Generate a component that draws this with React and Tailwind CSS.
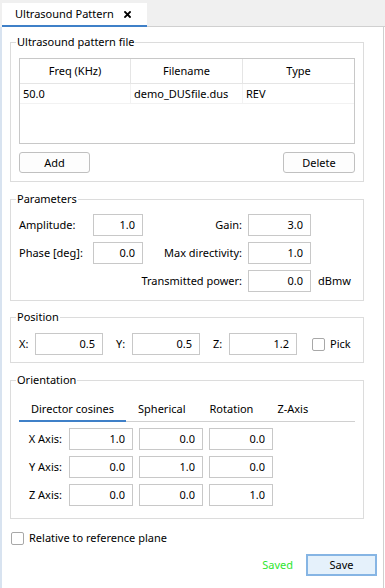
import React from "react";

const Field = ({ value, className = "" }) => (
  <div className={`h-[22px] border border-[#c8c8c8] bg-white flex items-center justify-end pr-[7px] ${className}`}>
    {value}
  </div>
);

const Group = ({ title, className = "", children }) => (
  <fieldset className={`w-[354px] border border-[#dcdcdc] px-0 ${className}`}>
    <legend className="ml-[5px] px-[1px] leading-[16px]">{title}</legend>
    {children}
  </fieldset>
);

const Check = () => (
  <span className="inline-block w-[13px] h-[13px] border border-[#a8a8a8] rounded-[2px] bg-white" />
);

const App = () => {
  const axes = [
    ["X Axis:", "1.0", "0.0", "0.0"],
    ["Y Axis:", "0.0", "1.0", "0.0"],
    ["Z Axis:", "0.0", "0.0", "1.0"],
  ];

  return (
    <div className="w-[385px] h-[588px] bg-white flex flex-col overflow-hidden text-[11px] leading-[16px] text-black font-['Noto_Sans',sans-serif]">
      {/* Tab strip */}
      <div className="h-[27px] bg-[#f0f0f0] flex items-end shrink-0">
        <div className="w-[2px] h-full" />
        <div className="w-[145px] h-[24px] bg-white border-b-2 border-[#3f80c8] flex items-center pl-[13px]">
          <span>Ultrasound Pattern</span>
          <svg className="ml-[10px]" width="7" height="7" viewBox="0 0 7 7">
            <path d="M1 1L6 6M6 1L1 6" stroke="#000" strokeWidth="1.8" strokeLinecap="square" />
          </svg>
        </div>
        <div className="flex-1 h-full border-b border-[#d0d0d0]" />
      </div>

      <div className="flex-1 flex">
        <div className="w-[2px] bg-[#d8e3f0]" />
        <div className="flex-1 flex flex-col pl-[8px]">
          {/* Ultrasound pattern file */}
          <Group title="Ultrasound pattern file" className="mt-[7px]">
            <div className="px-[8px] pt-[8px] pb-[8px]">
              <div className="h-[86px] border border-[#c8c8c8] flex flex-col">
                <div className="grid grid-cols-[111px_112px_1fr] h-[25px] border-b border-[#e5e5e5]">
                  <div className="border-r border-[#e5e5e5] flex items-center justify-center">Freq (KHz)</div>
                  <div className="border-r border-[#e5e5e5] flex items-center justify-center">Filename</div>
                  <div className="flex items-center justify-center">Type</div>
                </div>
                <div className="grid grid-cols-[111px_112px_1fr] h-[20px] border-b border-[#f2f2f2]">
                  <div className="border-r border-[#f2f2f2] flex items-center pl-[3px]">50.0</div>
                  <div className="border-r border-[#f2f2f2] flex items-center pl-[3px]">demo_DUSfile.dus</div>
                  <div className="flex items-center pl-[3px]">REV</div>
                </div>
              </div>
              <div className="flex justify-between mt-[8px]">
                <button className="w-[71px] h-[21px] border border-[#c0c0c0] rounded-[3px] bg-[#fdfdfd]">Add</button>
                <button className="w-[72px] h-[21px] border border-[#c0c0c0] rounded-[3px] bg-[#fdfdfd]">Delete</button>
              </div>
            </div>
          </Group>

          {/* Parameters */}
          <Group title="Parameters" className="mt-[9px]">
            <div className="px-[8px] pt-[7px] pb-[8px] grid grid-cols-[74px_50px_105px_63px_auto] gap-y-[6px] items-center">
              <div>Amplitude:</div>
              <Field value="1.0" />
              <div className="text-right pr-[6px]">Gain:</div>
              <Field value="3.0" />
              <div />
              <div>Phase [deg]:</div>
              <Field value="0.0" />
              <div className="text-right pr-[6px]">Max directivity:</div>
              <Field value="1.0" />
              <div />
              <div className="col-span-3 text-right pr-[6px]">Transmitted power:</div>
              <Field value="0.0" />
              <div className="pl-[7px]">dBmw</div>
            </div>
          </Group>

          {/* Position */}
          <Group title="Position" className="mt-[8px]">
            <div className="px-[8px] pt-[8px] pb-[7px] flex items-center">
              <div className="w-[16px]">X:</div>
              <Field value="0.5" className="w-[68px]" />
              <div className="w-[16px] ml-[13px]">Y:</div>
              <Field value="0.5" className="w-[68px]" />
              <div className="w-[16px] ml-[13px]">Z:</div>
              <Field value="1.2" className="w-[68px]" />
              <div className="ml-[15px] flex items-center gap-[5px]">
                <Check />
                <span>Pick</span>
              </div>
            </div>
          </Group>

          {/* Orientation */}
          <Group title="Orientation" className="mt-[9px]">
            <div className="px-[8px] pt-[13px] pb-[12px]">
              <div className="flex border-b border-[#d0d0d0]">
                <div className="-mb-px px-[12px] pb-[3px] border-b-2 border-[#3f80c8]">Director cosines</div>
                <div className="-mb-px px-[12px] pb-[3px] border-b-2 border-transparent">Spherical</div>
                <div className="-mb-px px-[12px] pb-[3px] border-b-2 border-transparent">Rotation</div>
                <div className="-mb-px px-[12px] pb-[3px] border-b-2 border-transparent">Z-Axis</div>
              </div>
              <div className="mt-[6px] grid grid-cols-[44px_64px_64px_64px] gap-x-[6px] gap-y-[6px] items-center">
                {axes.map(([label, a, b, c]) => (
                  <React.Fragment key={label}>
                    <div className="text-right pr-[1px] whitespace-nowrap">{label}</div>
                    <Field value={a} />
                    <Field value={b} />
                    <Field value={c} />
                  </React.Fragment>
                ))}
              </div>
            </div>
          </Group>

          <div className="mt-[11px] h-[16px] flex items-center gap-[5px] pl-[1px]">
            <Check />
            <span>Relative to reference plane</span>
          </div>

          <div className="mt-[8px] flex items-center justify-end pr-[6px]">
            <span className="text-[#2ee62e] mr-[13px]">Saved</span>
            <button className="w-[71px] h-[22px] border-2 border-[#86b5e4] bg-[#e5f1fb]">Save</button>
          </div>
        </div>
        <div className="w-px bg-[#d0d0d0]" />
        <div className="w-px bg-white" />
      </div>
    </div>
  );
};

export default App;
